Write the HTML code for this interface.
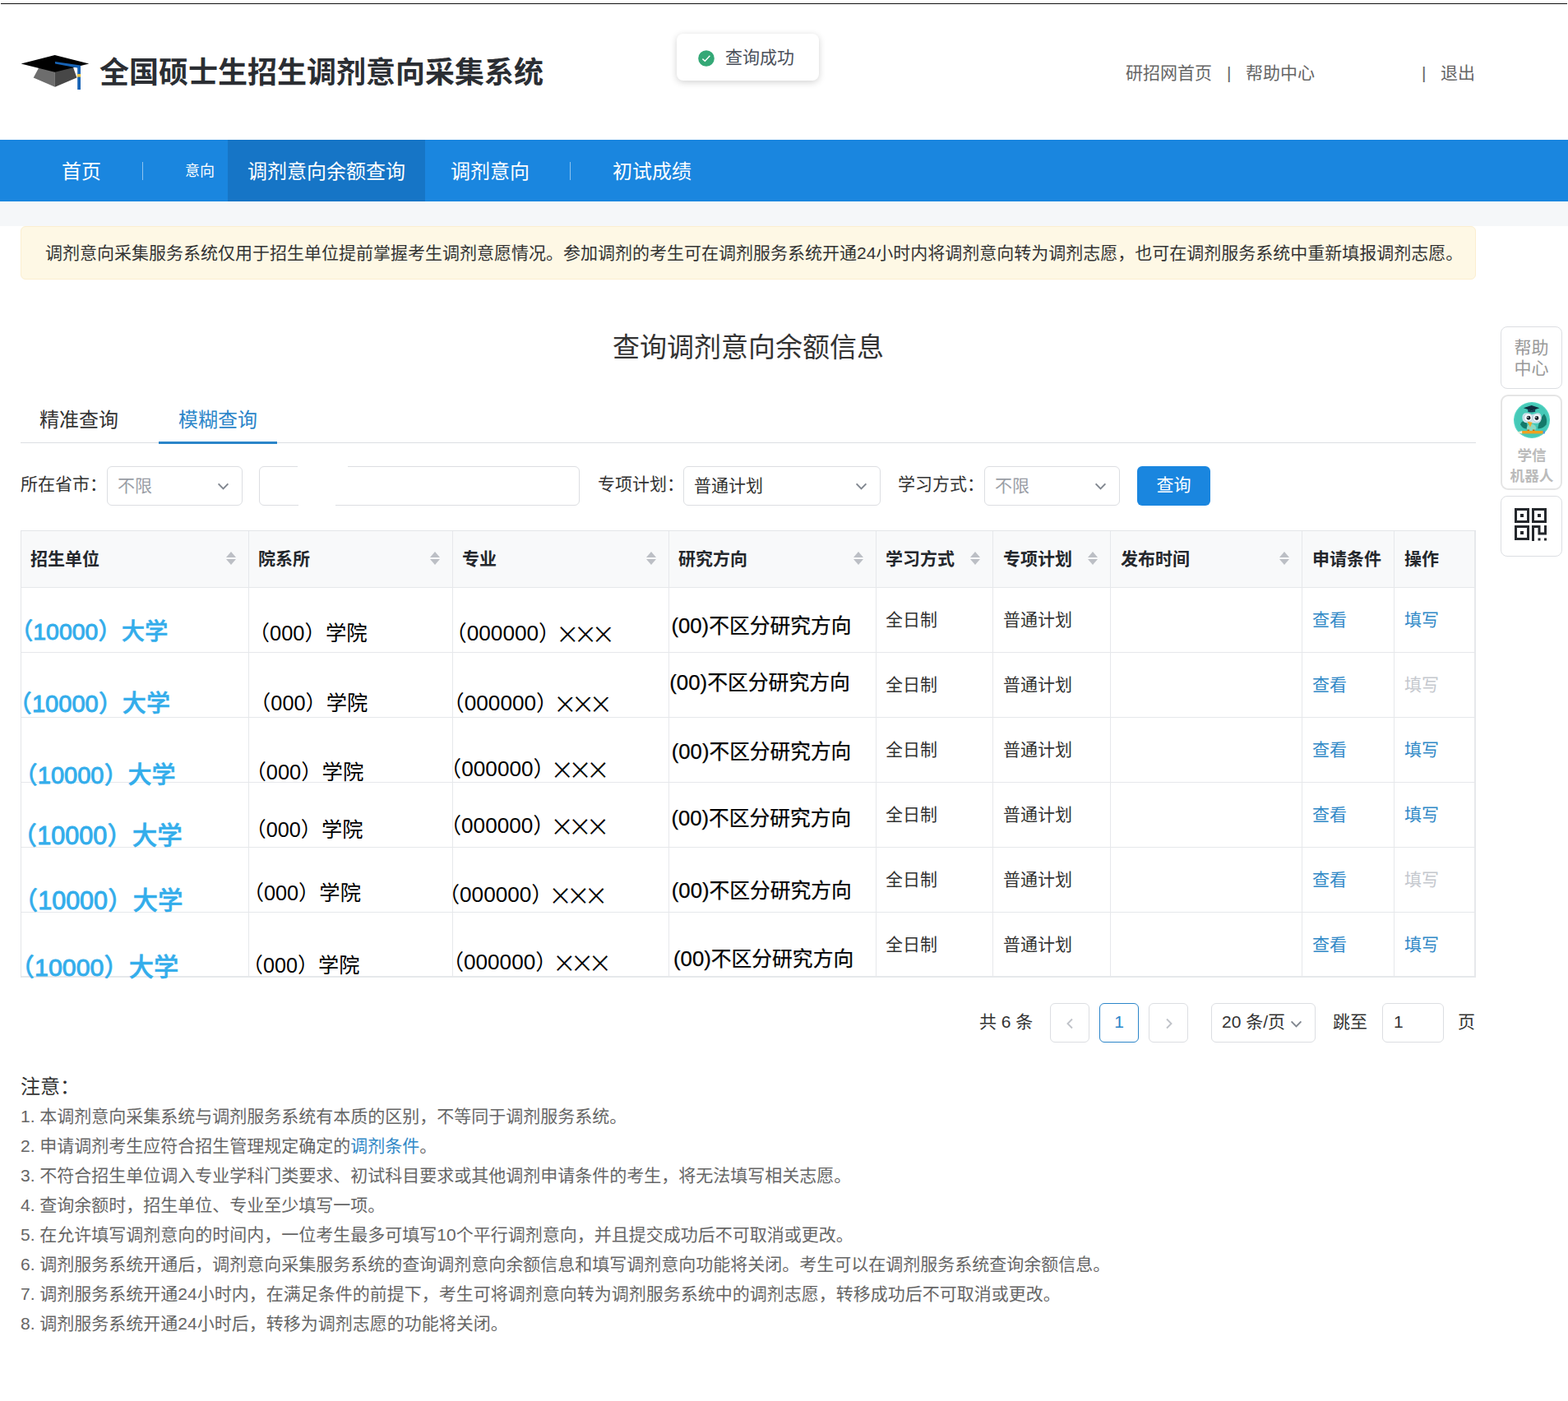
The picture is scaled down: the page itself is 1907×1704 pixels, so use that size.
<!DOCTYPE html>
<html lang="zh-CN">
<head>
<meta charset="utf-8">
<title>全国硕士生招生调剂意向采集系统</title>
<style>
*{box-sizing:border-box;margin:0;padding:0}
html,body{width:1907px;height:1704px;overflow:hidden;background:#fff}
body{position:relative;font-family:"Liberation Sans","Noto Sans CJK SC",sans-serif;font-size:21px;color:#333;line-height:1}
a{text-decoration:none;color:inherit}
.abs{position:absolute;white-space:nowrap}
#topline{left:1px;top:4px;width:1905px;height:1px;background:#111}
/* header */
#logo{left:24px;top:65px;width:86px;height:46px}
#title{left:121px;top:65px;height:48px;line-height:48px;font-size:36px;font-weight:bold;color:#2b2e33}
#toplinks{left:1369px;top:74px;height:30px;line-height:30px;font-size:21px;color:#666}
#toplinks span{position:absolute;top:0}
#toast{left:823px;top:41px;width:173px;height:57px;background:#fff;border-radius:8px;box-shadow:0 2px 9px rgba(0,0,0,.18)}
#toast svg{position:absolute;left:26px;top:19.5px}
#toast b{position:absolute;left:59px;top:0;line-height:58px;font-weight:normal;font-size:21px;color:#4a4f5a}
/* nav */
#nav{left:0;top:170px;width:1907px;height:75px;background:#1a86df;color:#fff;font-size:24px;line-height:77px}
#nav .on{position:absolute;left:277px;top:0;width:240px;height:75px;background:#1675c6}
#nav span{position:absolute;top:0}
#nav i{position:absolute;top:27px;width:1px;height:22px;background:rgba(255,255,255,.5)}
#band{left:0;top:245px;width:1907px;height:30px;background:#f5f7f9}
#alert{left:25px;top:275px;width:1770px;height:65px;background:#fef8e5;border:1px solid #fbeed0;border-radius:6px;line-height:63px;padding-left:29px;font-size:21px;color:#333}

/* main */
#h2{left:25px;top:398px;width:1770px;height:50px;line-height:50px;text-align:center;font-size:33px;font-weight:normal;color:#333}
#tabs{left:25px;top:483px;width:1770px;height:56px;border-bottom:1px solid #dcdee2;font-size:24px;line-height:56px}
#tabs span{position:absolute;top:0}
#tabs .bar{position:absolute;left:168px;top:54px;width:144px;height:3px;background:#2b85c9}
#form{left:25px;top:567px;width:1770px;height:48px;line-height:45px;font-size:21px;color:#333}
#form label{position:absolute;top:0;line-height:44px}
#form .box{position:absolute;top:0;height:48px;border:1px solid #dcdee2;border-radius:6px;background:#fff;line-height:45px;padding-left:12px}
#form .ph{color:#9a9ea6}
#form .box svg{position:absolute;right:15px;top:17px}
#btn{position:absolute;left:1358px;top:0;width:89px;height:48px;border-radius:6px;background:#1a86df;color:#fff;text-align:center;line-height:46px;font-size:21px}

/* table */
#tbl{left:25px;top:645px;width:1770px;height:543px;border-collapse:separate;border-spacing:0;table-layout:fixed;border-left:1px solid #e3e5e8;border-top:1px solid #e3e5e8;font-size:21px;color:#333}
#tbl th,#tbl td{border-right:1px solid #e6e8eb;border-bottom:1px solid #e6e8eb;padding:0 0 0 11px;text-align:left;vertical-align:middle;white-space:nowrap;overflow:visible}
#tbl th{position:relative}
#tbl th{height:69px;background:#f8f9fa;font-weight:bold;color:#24272c;line-height:24px}
#tbl td{height:79px;background:#fff;line-height:24px}
#tbl th i{position:absolute;right:14px;top:25px;width:13px;height:16px}
#tbl th i:before,#tbl th i:after{content:"";position:absolute;left:0;border-left:6.5px solid transparent;border-right:6.5px solid transparent}
#tbl th i:before{top:0;border-bottom:7px solid #bcbfc5}
#tbl th i:after{top:9px;border-top:7px solid #bcbfc5}
#tbl a{color:#3289c7}
#tbl a.dis{color:#c5c8ce}
#tbl .p{position:absolute;z-index:2;white-space:nowrap;line-height:1;color:#000;font-weight:400}
#tbl td:nth-child(n+6),#tbl th:nth-child(n+6){padding-left:12px}
#tbl .p4{-webkit-text-stroke:.25px #000}
#tbl .p1{color:#33adeb;font-weight:500;-webkit-text-stroke:.5px #33adeb}
#tbl .p1 .d{-webkit-text-stroke:.95px #33adeb}
#tbl .p .x{font-size:1.74em;letter-spacing:-.105em;margin-left:-.095em;position:relative;top:.17em;-webkit-text-stroke:1.2px #fff}
#tbl .p .l{font-size:1.04em}
/*FIT-START*/
#r0c1{font-size:28.4px;left:-14.1px;top:108.4px}
#r1c1{font-size:29.09px;left:-16.2px;top:195.7px}
#r2c1{font-size:29.06px;left:-9.3px;top:282.7px}
#r3c1{font-size:30.56px;left:-11.4px;top:355.1px}
#r4c1{font-size:30.5px;left:-10.3px;top:433.9px}
#r5c1{font-size:30.3px;left:-14.2px;top:515.9px}
#r0c2{font-size:25.44px;left:276.6px;top:112px}
#r1c2{font-size:25.28px;left:278.1px;top:197.4px}
#r2c2{font-size:25.4px;left:272.4px;top:280.6px}
#r3c2{font-size:25.23px;left:272.5px;top:350.9px}
#r4c2{font-size:25.27px;left:269.7px;top:428px}
#r5c2{font-size:25.15px;left:268.8px;top:515.9px}
#r0c3{font-size:26.2px;left:515.5px;top:95.1px}
#r1c3{font-size:26.2px;left:512.5px;top:180.2px}
#r2c3{font-size:26.17px;left:509.1px;top:260.4px}
#r3c3{font-size:26.17px;left:508.9px;top:329.1px}
#r4c3{font-size:26.17px;left:506.9px;top:413px}
#r5c3{font-size:26.14px;left:511.9px;top:495.4px}
#r0c4{font-size:24.75px;left:790.4px;top:102.9px}
#r1c4{font-size:24.84px;left:788.2px;top:172.4px}
#r2c4{font-size:24.7px;left:790.8px;top:256.1px}
#r3c4{font-size:24.73px;left:790.4px;top:336.7px}
#r4c4{font-size:24.75px;left:790.8px;top:425.3px}
#r5c4{font-size:24.77px;left:793px;top:507.5px}
/*FIT-END*/
#tbl td:last-child,#tbl th:last-child{border-right-width:2px}
#tbl tr:last-child td{border-bottom-width:2px}
/* pager */
#pager{left:1147px;top:1220px;width:660px;height:48px;font-size:21px;line-height:46px;color:#333}
#pager>*{position:absolute;top:0;height:48px}
#pager .b{border:1px solid #dcdee2;border-radius:6px;background:#fff;text-align:center;line-height:44px}
#pager .cur{border-color:#2b85c9;color:#2b85c9}
#pager svg{position:absolute}
/* notes */
#notes{left:25px;top:1300px;width:1770px}
#notes h3{font-size:24px;font-weight:normal;color:#333;height:40px;line-height:44px}
#notes ol{list-style:none}
#notes li{font-size:21px;line-height:36px;height:36px;color:#666;white-space:nowrap}
#notes a{color:#3289c7}
/* side */
.sb{width:75px;border:1px solid #dcdee2;border-radius:8px;background:#fff;text-align:center;color:#999}
</style>
</head>
<body>
<div class="abs" id="topline"></div>
<div class="abs" id="logo"><svg width="86" height="46" viewBox="24 65 86 46">
<polygon points="48.5,80 40.7,94.6 66.9,105.8 66.9,84" fill="#6d6d6d"/>
<polygon points="66.9,84 66.9,105.8 93.4,94.6 88.4,80" fill="#474747"/>
<polygon points="25.6,77.6 66.7,67.1 108.2,77.6 66.7,87.8" fill="#000"/>
<polygon points="67,75 97.8,79.6 97.8,83.2 67,77.6" fill="#1763b5"/>
<rect x="94.2" y="80" width="3.8" height="29" fill="#1763b5"/>
<rect x="93.8" y="90" width="4.4" height="3.6" fill="#e8c64a"/>
</svg></div>
<h1 class="abs" id="title">全国硕士生招生调剂意向采集系统</h1>
<div class="abs" id="toplinks"><span style="left:0">研招网首页</span><span style="left:123px">|</span><span style="left:146px">帮助中心</span><span style="left:360px">|</span><span style="left:383px">退出</span></div>
<div class="abs" id="toast"><svg width="20" height="20" viewBox="0 0 20 20"><circle cx="10" cy="10" r="9.8" fill="#34a876"/><path d="M5.4 10.6 L8.4 13.2 L14.4 6.8" fill="none" stroke="#fff" stroke-width="1.4"/></svg><b>查询成功</b></div>
<div class="abs" id="nav"><div class="on"></div><span style="left:75px">首页</span><i style="left:173px"></i><span style="left:225px;font-size:18px">意向</span><span style="left:301px">调剂意向余额查询</span><span style="left:548px">调剂意向</span><i style="left:693px"></i><span style="left:745px">初试成绩</span></div>
<div class="abs" id="band"></div>
<div class="abs" id="alert">调剂意向采集服务系统仅用于招生单位提前掌握考生调剂意愿情况。参加调剂的考生可在调剂服务系统开通24小时内将调剂意向转为调剂志愿，也可在调剂服务系统中重新填报调剂志愿。</div>
<h2 class="abs" id="h2">查询调剂意向余额信息</h2>
<div class="abs" id="tabs"><span style="left:23px;color:#333">精准查询</span><span style="left:192px;color:#2b85c9">模糊查询</span><div class="bar"></div></div>
<div class="abs" id="form">
<label style="left:0">所在省市：</label><div class="box" style="left:105px;width:165px"><span class="ph">不限</span><svg width="15" height="13" viewBox="0 0 15 13"><path d="M1.6 3.4 L7.5 9.4 L13.4 3.4" fill="none" stroke="#80868f" stroke-width="1.9"/></svg></div>
<div class="box" style="left:290px;width:390px"></div><i style="position:absolute;left:337px;top:-1px;width:61px;height:3px;background:#fff"></i><i style="position:absolute;left:338px;top:46px;width:45px;height:3px;background:#fff"></i>
<label style="left:702px">专项计划：</label><div class="box" style="left:806px;width:240px"><span>普通计划</span><svg width="15" height="13" viewBox="0 0 15 13"><path d="M1.6 3.4 L7.5 9.4 L13.4 3.4" fill="none" stroke="#80868f" stroke-width="1.9"/></svg></div>
<label style="left:1067px">学习方式：</label><div class="box" style="left:1172px;width:165px"><span class="ph">不限</span><svg width="15" height="13" viewBox="0 0 15 13"><path d="M1.6 3.4 L7.5 9.4 L13.4 3.4" fill="none" stroke="#80868f" stroke-width="1.9"/></svg></div>
<div id="btn">查询</div>
</div>
<table class="abs" id="tbl">
<colgroup><col style="width:277px"><col style="width:248px"><col style="width:263px"><col style="width:252px"><col style="width:142px"><col style="width:143px"><col style="width:233px"><col style="width:112px"><col style="width:99px"></colgroup>
<thead><tr><th>招生单位<i></i></th><th>院系所<i></i></th><th>专业<i></i></th><th>研究方向<i></i></th><th>学习方式<i></i></th><th>专项计划<i></i></th><th>发布时间<i></i></th><th>申请条件</th><th>操作</th></tr></thead>
<tbody>
<tr><td><span class="p p1" id="r0c1">（<span class="d">10000</span>）大学</span></td><td><span class="p" id="r0c2">（000）学院</span></td><td><span class="p" id="r0c3">（000000）<span class="x">×××</span></span></td><td><span class="p p4" id="r0c4"><span class="l">(00)</span>不区分研究方向</span></td><td>全日制</td><td>普通计划</td><td></td><td><a>查看</a></td><td><a>填写</a></td></tr>
<tr><td><span class="p p1" id="r1c1">（<span class="d">10000</span>）大学</span></td><td><span class="p" id="r1c2">（000）学院</span></td><td><span class="p" id="r1c3">（000000）<span class="x">×××</span></span></td><td><span class="p p4" id="r1c4"><span class="l">(00)</span>不区分研究方向</span></td><td>全日制</td><td>普通计划</td><td></td><td><a>查看</a></td><td><a class="dis">填写</a></td></tr>
<tr><td><span class="p p1" id="r2c1">（<span class="d">10000</span>）大学</span></td><td><span class="p" id="r2c2">（000）学院</span></td><td><span class="p" id="r2c3">（000000）<span class="x">×××</span></span></td><td><span class="p p4" id="r2c4"><span class="l">(00)</span>不区分研究方向</span></td><td>全日制</td><td>普通计划</td><td></td><td><a>查看</a></td><td><a>填写</a></td></tr>
<tr><td><span class="p p1" id="r3c1">（<span class="d">10000</span>）大学</span></td><td><span class="p" id="r3c2">（000）学院</span></td><td><span class="p" id="r3c3">（000000）<span class="x">×××</span></span></td><td><span class="p p4" id="r3c4"><span class="l">(00)</span>不区分研究方向</span></td><td>全日制</td><td>普通计划</td><td></td><td><a>查看</a></td><td><a>填写</a></td></tr>
<tr><td><span class="p p1" id="r4c1">（<span class="d">10000</span>）大学</span></td><td><span class="p" id="r4c2">（000）学院</span></td><td><span class="p" id="r4c3">（000000）<span class="x">×××</span></span></td><td><span class="p p4" id="r4c4"><span class="l">(00)</span>不区分研究方向</span></td><td>全日制</td><td>普通计划</td><td></td><td><a>查看</a></td><td><a class="dis">填写</a></td></tr>
<tr><td><span class="p p1" id="r5c1">（<span class="d">10000</span>）大学</span></td><td><span class="p" id="r5c2">（000）学院</span></td><td><span class="p" id="r5c3">（000000）<span class="x">×××</span></span></td><td><span class="p p4" id="r5c4"><span class="l">(00)</span>不区分研究方向</span></td><td>全日制</td><td>普通计划</td><td></td><td><a>查看</a></td><td><a>填写</a></td></tr>
</tbody></table>
<div class="abs" id="pager"><span style="left:44px">共 6 条</span>
<a class="b" style="left:130px;width:48px"><svg width="10" height="14" viewBox="0 0 10 14" style="left:18px;top:17px"><path d="M8 1.5 L2.5 7 L8 12.5" fill="none" stroke="#c0c3c9" stroke-width="1.9"/></svg></a>
<a class="b cur" style="left:190px;width:48px">1</a>
<a class="b" style="left:250px;width:48px"><svg width="10" height="14" viewBox="0 0 10 14" style="left:19px;top:17px"><path d="M2 1.5 L7.5 7 L2 12.5" fill="none" stroke="#c0c3c9" stroke-width="1.9"/></svg></a>
<div class="b" style="left:326px;width:127px;text-align:left;padding-left:12px">20 条/页<svg width="15" height="13" viewBox="0 0 15 13" style="right:15px;top:18px"><path d="M1.6 3.4 L7.5 9.4 L13.4 3.4" fill="none" stroke="#80868f" stroke-width="1.9"/></svg></div>
<span style="left:474px">跳至</span>
<div class="b" style="left:534px;width:75px;text-align:left;padding-left:13px">1</div>
<span style="left:626px">页</span></div>
<div class="abs" id="notes"><h3>注意：</h3>
<ol>
<li>1. 本调剂意向采集系统与调剂服务系统有本质的区别，不等同于调剂服务系统。</li>
<li>2. 申请调剂考生应符合招生管理规定确定的<a>调剂条件</a>。</li>
<li>3. 不符合招生单位调入专业学科门类要求、初试科目要求或其他调剂申请条件的考生，将无法填写相关志愿。</li>
<li>4. 查询余额时，招生单位、专业至少填写一项。</li>
<li>5. 在允许填写调剂意向的时间内，一位考生最多可填写10个平行调剂意向，并且提交成功后不可取消或更改。</li>
<li>6. 调剂服务系统开通后，调剂意向采集服务系统的查询调剂意向余额信息和填写调剂意向功能将关闭。考生可以在调剂服务系统查询余额信息。</li>
<li>7. 调剂服务系统开通24小时内，在满足条件的前提下，考生可将调剂意向转为调剂服务系统中的调剂志愿，转移成功后不可取消或更改。</li>
<li>8. 调剂服务系统开通24小时后，转移为调剂志愿的功能将关闭。</li>
</ol></div>
<div class="abs sb" style="left:1825px;top:397px;height:76px;font-size:21px;line-height:25px;padding-top:12px">帮助<br>中心</div>
<div class="abs sb" style="left:1825px;top:480px;height:116px;border:2px solid #e5e5e5;border-radius:9px">
<svg width="44" height="44" viewBox="0 0 43.4 43.4" style="position:absolute;left:14.3px;top:7.3px">
<circle cx="21.7" cy="21.7" r="21.7" fill="#52d3c2"/>
<circle cx="21.7" cy="21.7" r="20.3" fill="#45c9b7"/>
<path d="M29 30 Q31 20 36.5 14 Q41 20 39 27 Q36 32 29 32Z" fill="#14796a"/>
<path d="M8 27 Q9 22 15 22.5 L17 32 Q11 33 8 27Z" fill="#14796a"/>
<ellipse cx="21.2" cy="31" rx="5.6" ry="4.6" fill="#8bd9c3"/>
<path d="M10.3 19 Q10 12.5 16 13 L22 15 L28 13 Q33.5 12.5 33.2 19.5 Q33 25.5 27.5 25.5 L16 25 Q10.5 25 10.3 19Z" fill="#cfe4ee"/>
<circle cx="17.3" cy="18.6" r="5" fill="#f2f7fa" stroke="#a9c3d0" stroke-width=".7"/>
<circle cx="27.8" cy="19" r="5" fill="#f2f7fa" stroke="#a9c3d0" stroke-width=".7"/>
<circle cx="17.8" cy="19" r="2.4" fill="#16222b"/><circle cx="27.6" cy="19.2" r="2.4" fill="#16222b"/>
<circle cx="17" cy="18.2" r=".7" fill="#fff"/><circle cx="26.8" cy="18.4" r=".7" fill="#fff"/>
<path d="M16.3 23.4 L22.4 24.3 L19.8 30.2Z" fill="#f2a92c"/>
<path d="M11.8 7.1 L21.4 3.9 L30.9 7.1 L21.4 10.3Z" fill="#0f2c3d"/>
<path d="M17 8.6 L21.4 10.3 L25.8 8.6 L25.8 11.6 Q21.4 13.2 17 11.6Z" fill="#143a4f"/>
<rect x="16.2" y="33" width="2.6" height="1.8" fill="#b9701c"/><rect x="22.6" y="33" width="2.6" height="1.8" fill="#b9701c"/>
<rect x="10" y="34.5" width="25.2" height="3.4" fill="#f0a21f"/>
<path d="M3.8 36.2 L10 34.5 L10 37.9Z" fill="#f6ead0"/>
<rect x="35.2" y="34.5" width="2.2" height="3.4" fill="#4b9be6"/>
</svg>
<div style="position:absolute;left:0.5px;top:60.4px;width:71px;font-size:17.6px;line-height:24.4px;font-weight:bold;color:#bbb">学信<br>机器人</div></div>
<div class="abs sb" style="left:1825px;top:603px;height:74px">
<svg width="40" height="40" viewBox="0 0 40 40" style="position:absolute;left:16px;top:14px" fill="none" stroke="#24272c" stroke-width="3">
<rect x="1.5" y="1.5" width="15" height="15"/><rect x="22.5" y="1.5" width="15" height="15"/><rect x="1.5" y="22.5" width="15" height="15"/>
<path d="M22.5 40 V22.5 H30 V31 H37.5 V21"/>
<g fill="#24272c" stroke="none"><rect x="7" y="7" width="4" height="4"/><rect x="28" y="7" width="4" height="4"/><rect x="7" y="28" width="4" height="4"/><rect x="28.5" y="36.5" width="3" height="3"/><rect x="36" y="36.5" width="3" height="3"/></g>
</svg></div>
</body>
</html>
